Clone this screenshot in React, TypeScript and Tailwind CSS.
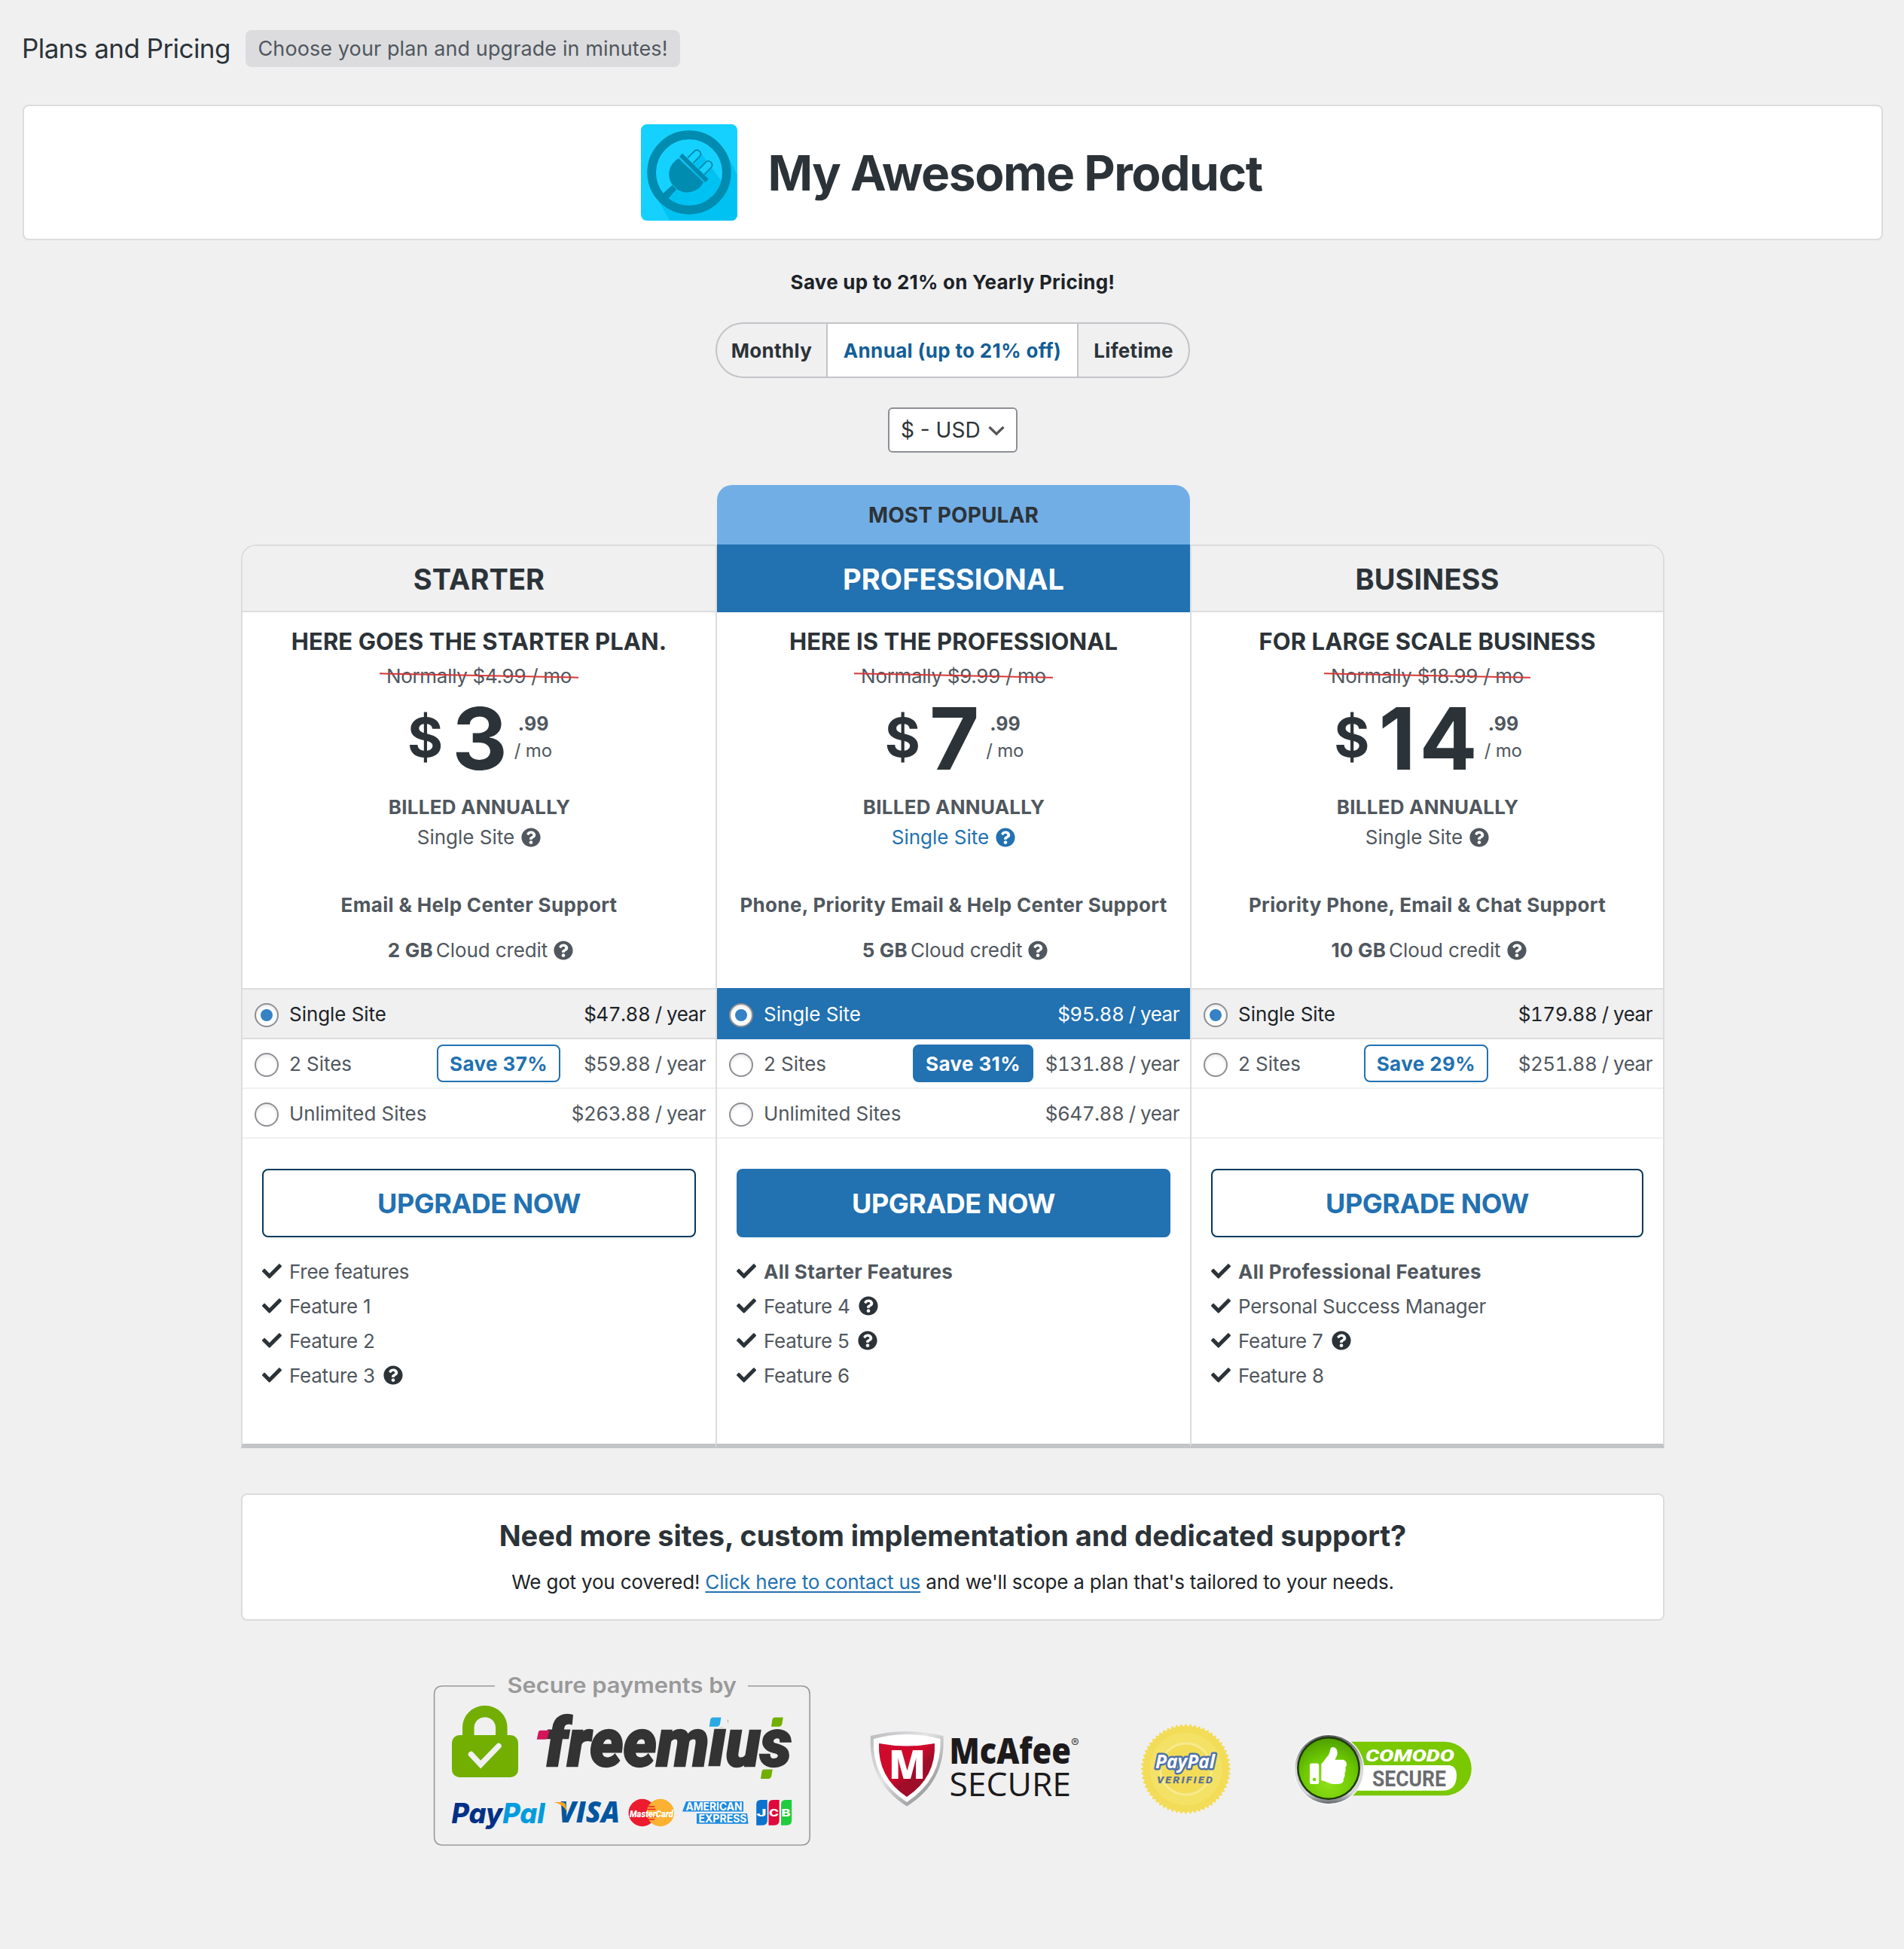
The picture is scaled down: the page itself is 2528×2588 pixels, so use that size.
import type { ReactNode } from "react";
import { FaCheck, FaQuestionCircle, FaThumbsUp } from "react-icons/fa";

type Row = { sites: string; price: string; save?: string };
type Feature = { label: string; bold?: boolean; help?: boolean };
type Plan = {
  name: string;
  tagline: string;
  normal: string;
  dollars: string;
  support: string;
  credit: string;
  rows: Row[];
  priceColumn: string;
  rowPadding: string;
  features: Feature[];
  popular?: boolean;
};

const plans: Plan[] = [
  {
    name: "STARTER",
    tagline: "HERE GOES THE STARTER PLAN.",
    normal: "Normally $4.99 / mo",
    dollars: "3",
    support: "Email & Help Center Support",
    credit: "2 GB",
    priceColumn: "w-[193px]",
    rowPadding: "pr-[13px]",
    rows: [
      { sites: "Single Site", price: "$47.88 / year" },
      { sites: "2 Sites", price: "$59.88 / year", save: "Save 37%" },
      { sites: "Unlimited Sites", price: "$263.88 / year" },
    ],
    features: [
      { label: "Free features" },
      { label: "Feature 1" },
      { label: "Feature 2" },
      { label: "Feature 3", help: true },
    ],
  },
  {
    name: "PROFESSIONAL",
    tagline: "HERE IS THE PROFESSIONAL",
    normal: "Normally $9.99 / mo",
    dollars: "7",
    support: "Phone, Priority Email & Help Center Support",
    credit: "5 GB",
    popular: true,
    priceColumn: "w-[194px]",
    rowPadding: "pr-[14px]",
    rows: [
      { sites: "Single Site", price: "$95.88 / year" },
      { sites: "2 Sites", price: "$131.88 / year", save: "Save 31%" },
      { sites: "Unlimited Sites", price: "$647.88 / year" },
    ],
    features: [
      { label: "All Starter Features", bold: true },
      { label: "Feature 4", help: true },
      { label: "Feature 5", help: true },
      { label: "Feature 6" },
    ],
  },
  {
    name: "BUSINESS",
    tagline: "FOR LARGE SCALE BUSINESS",
    normal: "Normally $18.99 / mo",
    dollars: "14",
    support: "Priority Phone, Email & Chat Support",
    credit: "10 GB",
    priceColumn: "w-[218px]",
    rowPadding: "pr-[14px]",
    rows: [
      { sites: "Single Site", price: "$179.88 / year" },
      { sites: "2 Sites", price: "$251.88 / year", save: "Save 29%" },
    ],
    features: [
      { label: "All Professional Features", bold: true },
      { label: "Personal Success Manager" },
      { label: "Feature 7", help: true },
      { label: "Feature 8" },
    ],
  },
];

function ProductLogo() {
  return (
    <svg viewBox="18 21 384 384" className="size-32 shrink-0 rounded-lg">
      <defs>
        <clipPath id="inner-disc">
          <circle cx="210" cy="213" r="140" />
        </clipPath>
      </defs>
      <rect x="18" y="21" width="384" height="384" fill="#15d1ff" />
      <polygon points="355,130 402,222 402,405 133,405 70,295" fill="#00c2f2" />
      <circle cx="210" cy="213" r="140" fill="#15d1ff" />
      <polygon points="256,134 352,265 352,405 100,405 125,310 160,280" fill="#00c2f2" clipPath="url(#inner-disc)" />
      <circle cx="210" cy="213" r="149.5" fill="none" stroke="#008bb0" strokeWidth="35" />
      <path d="M168 157 A72 72 0 1 0 267 251 Z" fill="#008bb0" />
      <polygon points="183,137 287,239 275,252 171,150" fill="#008bb0" />
      <path d="M170 153 L271 250" stroke="#15b4dc" strokeWidth="2.5" />
      <polygon points="143,263 161,279 124,320 103,299" fill="#008bb0" />
      <path d="M143 262 L162 280" stroke="#15c4ee" strokeWidth="3" />
      <path d="M204 155 L233 126 A15.5 15.5 0 0 1 254 147 L226 176" fill="#15d1ff" stroke="#008bb0" strokeWidth="5.5" />
      <path d="M250 199 L277 171 A15.5 15.5 0 0 1 299 192 L271 221" fill="#15d1ff" stroke="#008bb0" strokeWidth="5.5" />
    </svg>
  );
}

function Radio({ checked }: { checked: boolean }) {
  return (
    <span className="mt-1 flex size-8 shrink-0 items-center justify-center rounded-full border-2 border-[#8c8f94] bg-white shadow-[inset_0_2px_4px_rgba(0,0,0,0.1)]">
      {checked && <span className="size-4 rounded-full bg-[#3582c4]" />}
    </span>
  );
}

function PriceRow({ row, selected, plan }: { row?: Row; selected: boolean; plan: Plan }) {
  const tone = selected
    ? plan.popular
      ? "h-[68px] border-y-2 border-[#2271b1] bg-[#2271b1] text-white"
      : "h-[68px] border-y-2 border-[#dcdcde] bg-[#f0f0f1] text-[#1d2327]"
    : "h-[66px] border-b-2 border-[#f0f0f1] text-[#50575e]";
  return (
    <div className={`flex items-center pl-4 ${plan.rowPadding} ${tone}`}>
      {row && (
        <>
          <Radio checked={selected} />
          <span className="ml-[14px] flex-1 tracking-[-0.05px]">{row.sites}</span>
          {row.save && (
            <span
              className={`flex h-[50px] items-center rounded-lg border-2 border-[#2271b1] px-[15px] font-bold tracking-[0.4px] ${
                plan.popular ? "bg-[#2271b1] text-white" : "text-[#2271b1]"
              }`}
            >
              {row.save}
            </span>
          )}
          <span className={`text-right tracking-[-0.5px] tabular-nums ${plan.priceColumn}`}>{row.price}</span>
        </>
      )}
    </div>
  );
}

function PlanCard({ plan, index }: { plan: Plan; index: number }) {
  const corner = index === 0 ? "rounded-tl-[20px]" : index === 2 ? "rounded-tr-[20px]" : "";
  const innerCorner = index === 0 ? "rounded-tl-[18px]" : index === 2 ? "rounded-tr-[18px]" : "";
  const side = index === 2 ? "border-x-2" : "border-l-2";
  return (
    <div className="w-[630px]">
      <div className="h-[79px] pl-[2px]">
        {plan.popular && (
          <div className="flex h-full items-center justify-center rounded-t-[20px] bg-[#72aee6] text-[28px] font-bold tracking-[0.1px] text-[#2c3338]">
            MOST POPULAR
          </div>
        )}
      </div>
      <div
        className={`h-[1200px] border-b-[6px] border-[#dcdcde] border-b-[#c3c4c7] bg-white ${side} ${corner} ${
          plan.popular ? "" : "border-t-2"
        }`}
      >
        <div
          className={`flex items-center justify-center pt-[3px] text-[38px] font-bold tracking-[0.1px] ${innerCorner} ${
            plan.popular
              ? "h-[90px] bg-[#2271b1] text-white"
              : "h-[88px] border-b-2 border-[#dcdcde] bg-[#f0f0f1] text-[#2c3338]"
          }`}
        >
          {plan.name}
        </div>
        <div className="flex flex-col items-center pt-[14px] leading-10 text-[#50575e]">
          <div className="text-[31px] leading-[50px] font-bold tracking-[0.1px] text-[#2c3338]">{plan.tagline}</div>
          <div className="relative top-px px-[9px] tracking-[-0.3px]">
            {plan.normal}
            <span className="absolute top-[18px] left-0 h-[2px] w-full rotate-[1.15deg] bg-[#d63638]" />
          </div>
          <div className="mt-[14px] flex h-[100px] items-center pl-[2px] text-[#2c3338]">
            <span className="mb-[5px] text-[72px] leading-[95px] font-bold">$</span>
            <span className="ml-3 text-[114px] leading-[100px] font-bold">
              {plan.dollars.length > 1 ? <span className="-mr-[5px] tracking-[5px]">{plan.dollars}</span> : plan.dollars}
            </span>
            <div className="mb-[4px] ml-[9px] leading-9 text-[#50575e]">
              <div className="pl-[5px] text-[25px] leading-9 font-bold">.99</div>
              <div className="text-[24px] leading-9 tracking-[-0.2px]">/ mo</div>
            </div>
          </div>
          <div className="mt-[21px] pl-px font-bold tracking-[0.25px]">BILLED ANNUALLY</div>
          <div className={`flex items-center gap-[9px] ${plan.popular ? "text-[#2271b1]" : ""}`}>
            Single Site <FaQuestionCircle />
          </div>
          <div className="mt-[50px] font-bold tracking-[0.33px]">{plan.support}</div>
          <div className="mt-5 flex items-center pl-1">
            <span className="mr-1 font-bold tracking-[0.2px]">{plan.credit}</span>
            <span className="tracking-[-0.1px]">Cloud credit</span>
            <FaQuestionCircle className="ml-2" />
          </div>
        </div>
        <div className="mt-[30px]">
          {[0, 1, 2].map((i) => (
            <PriceRow key={i} row={plan.rows[i]} selected={i === 0} plan={plan} />
          ))}
        </div>
        <div className="px-[26px] pt-10">
          <button
            className={`h-[91px] w-full rounded-lg border-2 text-[36px] font-bold tracking-[-0.5px] ${
              plan.popular ? "border-[#2271b1] bg-[#2271b1] text-white" : "border-[#043959] bg-white text-[#2271b1]"
            }`}
          >
            UPGRADE NOW
          </button>
          <ul className="mt-[22px] leading-[46px] text-[#50575e]">
            {plan.features.map((f) => (
              <li key={f.label} className="flex h-[46px] items-center">
                <FaCheck className="mr-[10px] text-[#2c3338]" />
                <span className={`pt-[2px] ${f.bold ? "font-bold tracking-[0.3px]" : "tracking-[-0.25px]"}`}>{f.label}</span>
                {f.help && <FaQuestionCircle className="ml-[11px] text-[#2c3338]" />}
              </li>
            ))}
          </ul>
        </div>
      </div>
    </div>
  );
}

function Fit({
  x,
  y,
  w,
  children,
  ...rest
}: { x: number; y: number; w: number; children: ReactNode } & React.SVGProps<SVGTextElement>) {
  return (
    <text x={x} y={y} textLength={w} lengthAdjust="spacingAndGlyphs" {...rest}>
      {children}
    </text>
  );
}

function FreemiusBadge() {
  return (
    <svg viewBox="574 2214 504 240" className="h-[240px] w-[504px] shrink-0">
      <path
        d="M657 2238.7 H588 Q576.6 2238.7 576.6 2250 V2438 Q576.6 2450 588 2450 H1064 Q1075.2 2450 1075.2 2438 V2250 Q1075.2 2238.7 1064 2238.7 H993"
        fill="none"
        stroke="#999"
        strokeWidth="1.6"
      />
      <Fit x={673.5} y={2247.5} w={304.5} className="fill-[#999] font-[Inter] text-[28px] font-semibold">
        Secure payments by
      </Fit>
      <rect x="600" y="2304" width="88" height="56" rx="10" fill="#72af00" />
      <path d="M621.8 2306 V2294 A22 21.5 0 0 1 665.8 2294 V2306" fill="none" stroke="#72af00" strokeWidth="15.5" />
      <path d="M625.5 2329.5 L638.2 2343 L662 2318.5" fill="none" stroke="#f0f0f1" strokeWidth="7.5" strokeLinecap="round" />
      <Fit
        x={724}
        y={2344.7}
        w={327}
        stroke="#333"
        strokeWidth={2.5}
        className="fill-[#333] font-[Roboto] text-[89px] font-black italic"
      >
        freemius
      </Fit>
      <rect x="936" y="2273" width="30" height="20.5" fill="#f0f0f1" />
      <path d="M718 2297.7 H729.5 L727.5 2306 Q727 2309.8 723 2309.8 H712.8 L714.6 2301 Q715 2297.7 718 2297.7Z" fill="#d5145a" />
      <path d="M946.5 2280.5 H957.5 L956 2289 Q955.3 2292.7 951.5 2292.7 H941.7 L943 2284 Q943.6 2280.5 946.5 2280.5Z" fill="#2ba9e5" />
      <path d="M1028.5 2280.5 H1039.8 L1038.3 2289 Q1037.5 2292.7 1034 2292.7 H1024 L1025.3 2284 Q1026 2280.5 1028.5 2280.5Z" fill="#72af00" />
      <path d="M1014.5 2349.5 H1025.8 L1024.3 2358 Q1023.5 2362 1020 2362 H1010 L1011.3 2353 Q1012 2349.5 1014.5 2349.5Z" fill="#72af00" />
      <Fit x={599.5} y={2421} w={124} className="font-[Inter] text-[37px] font-extrabold italic">
        <tspan className="fill-[#003087]">Pay</tspan>
        <tspan className="fill-[#009cde]">Pal</tspan>
      </Fit>
      <Fit x={742} y={2420} w={81} className="fill-[#00579f] font-['Open_Sans'] text-[38px] font-extrabold italic">
        VISA
      </Fit>
      <path d="M735.6 2393 H746 Q751 2393.5 751.5 2398 L753 2406 Q748 2396 735.6 2393Z" fill="#faa21b" />
      <circle cx="852.7" cy="2407" r="18.2" fill="#ed1b2e" />
      <circle cx="876.8" cy="2407" r="18.2" fill="#fbb131" />
      <path d="M861 2399 H869 M859.5 2402.5 H870.5 M859.5 2412.5 H870.5 M861 2416 H869" stroke="#ed1b2e" strokeWidth="1.3" />
      <Fit x={836} y={2412.6} w={58} className="fill-white font-[Roboto] text-[13px] font-black italic">
        MasterCard
      </Fit>
      <path d="M911 2392 H987 V2405.5 H906 Z" fill="#1f8be0" />
      <path d="M925 2408 H992 L993.5 2421.8 H925 Z" fill="#1f8be0" />
      <Fit x={910.5} y={2404} w={75} className="fill-white font-[Inter] text-[14px] font-bold">
        AMERICAN
      </Fit>
      <Fit x={927.5} y={2420} w={64} className="fill-white font-[Inter] text-[14px] font-bold">
        EXPRESS
      </Fit>
      <path d="M1010 2390 H1018.8 V2417 Q1018.8 2423.7 1012 2423.7 H1004.2 V2396 Q1004.2 2390 1010 2390Z" fill="#0b72ce" />
      <path d="M1026.3 2390 H1034.7 V2417 Q1034.7 2423.7 1028 2423.7 H1020.5 V2396 Q1020.5 2390 1026.3 2390Z" fill="#e0093b" />
      <path d="M1042.8 2390 H1051.2 V2417 Q1051.2 2423.7 1044.5 2423.7 H1037 V2396 Q1037 2390 1042.8 2390Z" fill="#20cc3e" />
      <g className="fill-white font-[Inter] text-[13.5px] font-extrabold">
        <Fit x={1004.5} y={2411.8} w={13}>J</Fit>
        <Fit x={1021} y={2411.8} w={13}>C</Fit>
        <Fit x={1037.5} y={2411.8} w={12}>B</Fit>
      </g>
    </svg>
  );
}

function McAfeeBadge() {
  return (
    <svg viewBox="1154 2214 284 240" className="ml-[76px] h-[240px] w-[284px] shrink-0 overflow-visible">
      <defs>
        <linearGradient id="silver" x1="0" y1="0" x2="1" y2="1">
          <stop offset="0" stopColor="#b9b9bb" />
          <stop offset="0.4" stopColor="#e4e4e6" />
          <stop offset="1" stopColor="#77787b" />
        </linearGradient>
        <linearGradient id="crimson" x1="0" y1="0" x2="1" y2="1">
          <stop offset="0.45" stopColor="#cf0a2c" />
          <stop offset="0.6" stopColor="#a00d28" />
        </linearGradient>
      </defs>
      <path d="M1156 2305 Q1204 2293 1252.5 2305 Q1256 2366 1204 2398.5 Q1152 2366 1156 2305Z" fill="url(#silver)" />
      <path d="M1160 2309 Q1204 2297 1248.5 2309 Q1251 2362 1204 2393 Q1157 2362 1160 2309Z" fill="#fff" />
      <path d="M1167 2315 Q1204 2322 1241 2315 Q1243 2360 1204 2386 Q1165 2360 1167 2315Z" fill="url(#crimson)" />
      <Fit x={1180} y={2361.5} w={49} className="fill-white font-['Open_Sans'] text-[53px] font-extrabold">
        M
      </Fit>
      <Fit x={1260.5} y={2341.5} w={161.5} className="fill-[#1d1a1c] font-['Open_Sans'] text-[47px] font-extrabold">
        McAfee
      </Fit>
      <Fit x={1260.5} y={2385} w={161.5} className="fill-[#1d1a1c] font-['Open_Sans'] text-[43.5px] font-medium">
        SECURE
      </Fit>
      <text x="1422" y="2320" className="fill-[#444] font-[Inter] text-[16px]">
        ®
      </text>
    </svg>
  );
}

const sealPoints = Array.from({ length: 120 }, (_, i) => {
  const r = i % 2 ? 56.5 : 60;
  const a = (i / 120) * Math.PI * 2;
  return `${(1574.5 + r * Math.cos(a)).toFixed(1)},${(2349 + r * Math.sin(a)).toFixed(1)}`;
}).join(" ");

function PayPalSeal() {
  return (
    <svg viewBox="1513 2214 123 240" className="ml-[75px] h-[240px] w-[123px] shrink-0">
      <polygon points={sealPoints} fill="#f3dd58" />
      <circle cx="1574.5" cy="2349" r="48" fill="#f4e266" />
      <circle cx="1574.5" cy="2349" r="34" fill="#f3dd58" stroke="#f7ea90" strokeWidth="3" />
      <Fit
        x={1534}
        y={2348}
        w={79}
        stroke="#4f72a8"
        strokeWidth={5}
        strokeLinejoin="round"
        paintOrder="stroke"
        className="fill-white font-['Open_Sans'] text-[25px] font-bold italic"
      >
        PayPal
      </Fit>
      <Fit x={1536} y={2367.5} w={76} className="fill-[#5b7296] font-[Roboto] text-[12.5px] font-black tracking-[2px] italic">
        VERIFIED
      </Fit>
    </svg>
  );
}

function ComodoBadge() {
  return (
    <svg viewBox="1718 2214 240 240" className="ml-[82px] h-[240px] w-[240px] shrink-0">
      <defs>
        <linearGradient id="chrome" x1="0" y1="0" x2="0" y2="1">
          <stop offset="0" stopColor="#55585c" />
          <stop offset="0.5" stopColor="#d9dadc" />
          <stop offset="0.85" stopColor="#d5d6d9" />
          <stop offset="1" stopColor="#63666b" />
        </linearGradient>
        <radialGradient id="lime" cx="0.5" cy="0.75" r="0.75">
          <stop offset="0" stopColor="#8fe01a" />
          <stop offset="0.6" stopColor="#6cc800" />
          <stop offset="1" stopColor="#4fa000" />
        </radialGradient>
      </defs>
      <path d="M1790 2312.7 H1918 A35.8 35.8 0 0 1 1918 2384.3 H1790Z" fill="#79c800" />
      <path d="M1800 2344 H1925 Q1934 2346 1934 2357 Q1934 2377.7 1915 2377.7 H1800Z" fill="#fff" />
      <circle cx="1764.5" cy="2349.5" r="47" fill="#f7f7f7" />
      <circle cx="1764.5" cy="2349.5" r="45.5" fill="url(#chrome)" />
      <circle cx="1764" cy="2348" r="42" fill="#1f3a08" />
      <circle cx="1764" cy="2348" r="39.5" fill="url(#lime)" />
      <FaThumbsUp x={1739} y={2320} size={49} color="#fff" />
      <Fit x={1813} y={2339} w={118} className="fill-white font-[Roboto] text-[22.5px] font-black italic">
        COMODO
      </Fit>
      <Fit x={1822} y={2372.3} w={98} className="fill-[#6b6c70] font-[Roboto] text-[30px] font-bold">
        SECURE
      </Fit>
    </svg>
  );
}

export default function App() {
  return (
    <div className="min-h-screen w-[2528px] bg-[#f0f0f1] pt-10 font-['Inter',sans-serif] text-[26px] text-[#50575e]">
      <header className="flex h-[49px] items-center pl-[29px]">
        <h1 className="w-[297px] text-[35px] tracking-[-0.55px] whitespace-nowrap text-[#2c3338]">Plans and Pricing</h1>
        <span className="flex h-[49px] w-[577px] items-center justify-center rounded-lg bg-[#dcdcde] pt-px text-[27px] tracking-[0.1px] whitespace-nowrap">
          Choose your plan and upgrade in minutes!
        </span>
      </header>

      <section className="mt-[50px] mr-7 ml-[30px] flex h-[180px] items-center justify-center gap-10 rounded-lg border-2 border-[#dcdcde] bg-white pr-[3px]">
        <ProductLogo />
        <h2 className="pt-[2px] text-[64px] font-bold tracking-[-1.45px] text-[#2c3338]">My Awesome Product</h2>
      </section>

      <div className="flex flex-col items-center pl-[2px]">
        <p className="mt-9 leading-10 font-bold tracking-[0.25px] text-[#1d2327]">Save up to 21% on Yearly Pricing!</p>
        <div className="mt-[33px] flex h-[74px] w-[630px] overflow-hidden rounded-full border-2 border-[#c3c4c7] font-bold tracking-[0.35px] text-[#2c3338]">
          <span className="flex w-[145px] items-center justify-center">Monthly</span>
          <span className="flex w-[335px] items-center justify-center border-x-2 border-[#c3c4c7] bg-white text-[#135e96]">
            Annual (up to 21% off)
          </span>
          <span className="flex flex-1 items-center justify-center">Lifetime</span>
        </div>
        <div className="mt-[39px] flex h-[60px] w-[172px] items-center justify-between rounded-md border-2 border-[#8c8f94] bg-white pr-[14px] pl-[15px] text-[28px] text-[#2c3338]">
          $ - USD
          <svg viewBox="0 0 24 14" className="mt-[2px] h-[14px] w-6">
            <path d="M2.5 2 L12 11.2 L21.5 2" fill="none" stroke="#555" strokeWidth="3.2" />
          </svg>
        </div>
      </div>

      <main className="mt-[43px] flex pl-[320px]">
        {plans.map((p, i) => (
          <PlanCard key={p.name} plan={p} index={i} />
        ))}
      </main>

      <section className="mt-[60px] ml-[320px] h-[169px] w-[1890px] rounded-lg border-2 border-[#dcdcde] bg-white pt-6 text-center">
        <h3 className="text-[38px] leading-[60px] font-bold tracking-[-0.07px] text-[#2c3338]">
          Need more sites, custom implementation and dedicated support?
        </h3>
        <p className="mt-3 leading-10 tracking-[-0.19px] text-[#1d2327]">
          We got you covered!{" "}
          <a className="text-[#2271b1] underline decoration-2 underline-offset-[3px]">Click here to contact us</a> and we'll
          scope a plan that's tailored to your needs.
        </p>
      </section>

      <footer className="mt-[62px] flex pl-[574px]">
        <FreemiusBadge />
        <McAfeeBadge />
        <PayPalSeal />
        <ComodoBadge />
      </footer>
    </div>
  );
}
